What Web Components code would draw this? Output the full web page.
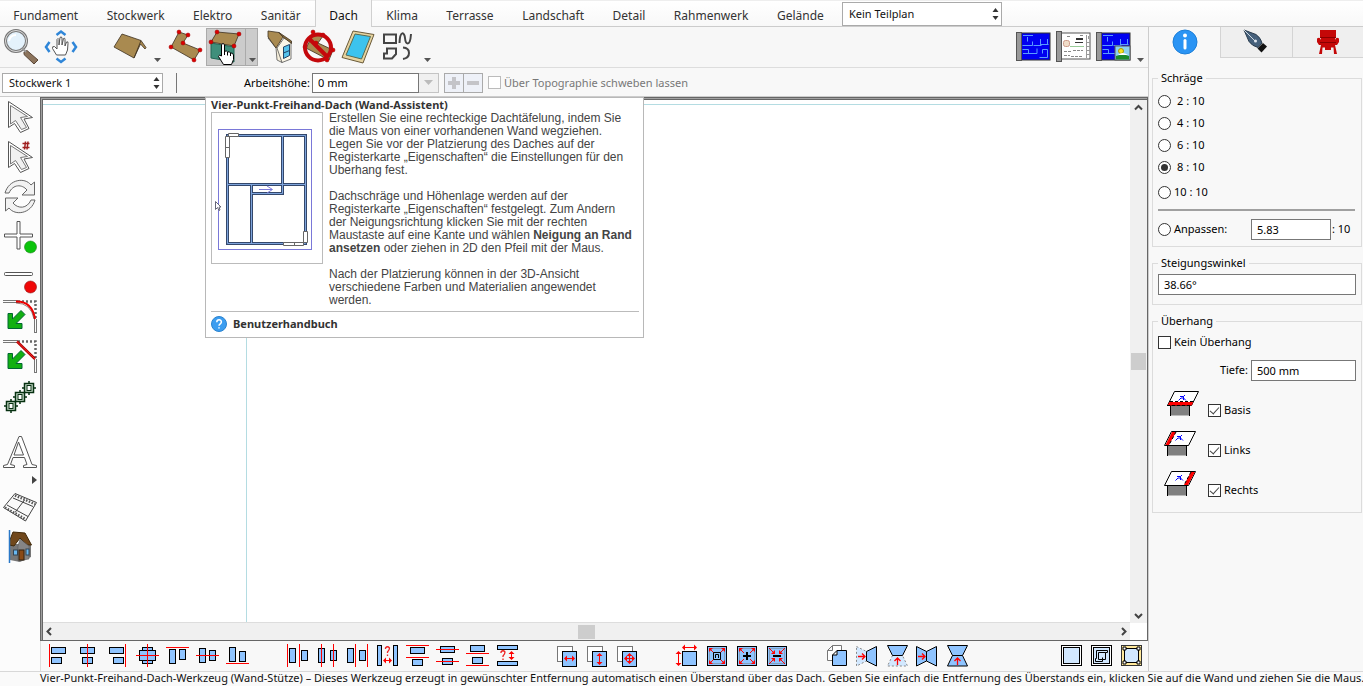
<!DOCTYPE html>
<html lang="de">
<head>
<meta charset="utf-8">
<title>Hausplaner – Dach</title>
<style>
html,body{height:100%}
body{margin:0;overflow:hidden;font:11px/16px "Noto Sans","Open Sans",sans-serif;color:#000;background:#f8f8f8}
</style>
</head>
<body>
<planner-app></planner-app>

<template id="planner-app">
<style>
:host{display:flex;flex-direction:column;height:100vh}
.main{flex:1;display:grid;grid-template-columns:minmax(0,1fr) 215px;min-height:0}
.left{display:flex;flex-direction:column;min-width:0;min-height:0}
.work{flex:1;display:grid;grid-template-columns:40px minmax(0,1fr);min-height:0;position:relative}
.stage{display:flex;flex-direction:column;min-height:0;min-width:0}
drawing-canvas{flex:1}
help-tip{position:absolute;left:205px;top:0}
</style>
<menu-bar></menu-bar>
<div class="main">
  <div class="left">
    <tool-bar></tool-bar>
    <option-bar></option-bar>
    <div class="work">
      <tool-rail></tool-rail>
      <div class="stage">
        <drawing-canvas></drawing-canvas>
        <align-bar></align-bar>
      </div>
      <help-tip>
        <span slot="title">Vier-Punkt-Freihand-Dach (Wand-Assistent)</span>
        <p>Erstellen Sie eine rechteckige Dachtäfelung, indem Sie<br>die Maus von einer vorhandenen Wand wegziehen.<br>Legen Sie vor der Platzierung des Daches auf der<br>Registerkarte „Eigenschaften“ die Einstellungen für den<br>Uberhang fest.</p>
        <p>Dachschräge und Höhenlage werden auf der<br>Registerkarte „Eigenschaften“ festgelegt. Zum Andern<br>der Neigungsrichtung klicken Sie mit der rechten<br>Maustaste auf eine Kante und wählen <b>Neigung an Rand<br>ansetzen</b> oder ziehen in 2D den Pfeil mit der Maus.</p>
        <p>Nach der Platzierung können in der 3D-Ansicht<br>verschiedene Farben und Materialien angewendet<br>werden.</p>
        <span slot="link">Benutzerhandbuch</span>
      </help-tip>
    </div>
  </div>
  <property-panel></property-panel>
</div>
<status-bar>Vier-Punkt-Freihand-Dach-Werkzeug (Wand-Stütze) – Dieses Werkzeug erzeugt in gewünschter Entfernung automatisch einen Überstand über das Dach. Geben Sie einfach die Entfernung des Überstands ein, klicken Sie auf die Wand und ziehen Sie die Maus.</status-bar>
</template>

<template id="menu-bar">
<style>
:host{display:flex;height:26px;border-bottom:1px solid #ccc;background:linear-gradient(#eee 1px,#fff 1px,#f8f8f8);font-size:12px}
nav{display:flex;width:838px}
a{flex:1 0 auto;text-align:center;padding:0 14px;line-height:31px;height:26px;color:#333;text-decoration:none}
a:first-child{padding-left:13px}
a.on{height:27px;background:#f7f7f7;box-shadow:inset 1px 0 #d0d0d0,inset -1px 0 #d0d0d0;color:#111}
select-box{width:160px;height:24px;margin:2px 0 0 4px;font-size:11px}
</style>
<nav aria-label="Register">
<a href="#fundament">Fundament</a><a href="#stockwerk">Stockwerk</a><a href="#elektro">Elektro</a><a href="#sanitaer">Sanitär</a><a href="#dach" class="on" aria-current="page">Dach</a><a href="#klima">Klima</a><a href="#terrasse">Terrasse</a><a href="#landschaft">Landschaft</a><a href="#detail">Detail</a><a href="#rahmenwerk">Rahmenwerk</a><a href="#gelaende">Gelände</a>
</nav>
<select-box label="Teilplan" value="Kein Teilplan"></select-box>
</template>

<template id="select-box">
<style>
:host{display:grid;grid-template-columns:1fr 12px;align-items:center;box-sizing:border-box}
select{grid-area:1/1/2/3;appearance:none;box-sizing:border-box;width:100%;height:100%;border:1px solid #aaa;border-radius:0;background:#fff;font:inherit;color:#111;padding:0 6px;margin:0}
svg{grid-area:1/2;pointer-events:none;z-index:1;margin-left:2px}
</style>
<select></select>
<svg width="7" height="12" viewBox="0 0 7 12"><path d="M3.500 0 6.500 4H.5ZM.5 8H6.500L3.500 12Z" fill="#333"/></svg>
</template>

<template id="tool-bar">
<style>
:host{display:flex;height:40px;border-bottom:1px solid #ddd;background:#f7f7f7}
button{border:0;background:none;padding:0;margin:1px 0 0;width:40px;height:38px;display:block;flex:none}
button.more{width:15px;display:flex;align-items:flex-end;justify-content:center;padding-bottom:4px;box-sizing:border-box}
.on{background:#ccc;box-shadow:inset 0 0 0 1px #aaa;margin-left:1px}
.more.on{width:12px;margin:1px 2px 0 0;box-shadow:inset -1px 0 #aaa,inset 0 1px #aaa,inset 0 -1px #aaa}
.g30{margin-left:30px}
.end{margin-left:auto}
</style>
<button aria-label="Zoom"><app-icon name="zoom"></app-icon></button>
<button aria-label="Verschieben"><app-icon name="pan"></app-icon></button>
<button class="g30" aria-label="Dach"><app-icon name="roof"></app-icon></button>
<button class="more" aria-label="Weitere Dächer"><app-icon name="down"></app-icon></button>
<button aria-label="Freihand-Dach"><app-icon name="lroof"></app-icon></button>
<button class="on" aria-label="Vier-Punkt-Freihand-Dach"><app-icon name="fourroof"></app-icon></button>
<button class="more on" aria-label="Weitere Freihand-Dächer"><app-icon name="down"></app-icon></button>
<button aria-label="Gaube"><app-icon name="dormer"></app-icon></button>
<button aria-label="Dachausschnitt"><app-icon name="noroof"></app-icon></button>
<button aria-label="Dachfenster"><app-icon name="skylight"></app-icon></button>
<button aria-label="Formen"><app-icon name="shapes"></app-icon></button>
<button class="more" aria-label="Weitere Formen"><app-icon name="down"></app-icon></button>
<button class="end" aria-label="2D-Ansicht"><app-icon name="blue"></app-icon></button>
<button aria-label="Planlayout"><app-icon name="sheet"></app-icon></button>
<button aria-label="3D-Ansicht"><app-icon name="blue3d"></app-icon></button>
<button class="more" aria-label="Weitere Ansichten"><app-icon name="down"></app-icon></button>
</template>

<template id="option-bar">
<style>
:host{display:flex;align-items:center;height:27px;border-bottom:1px solid #ccc;background:#f8f8f8;padding:1px 2px 0}
select-box{width:161px;height:20px}
hr{width:1px;height:20px;border:0;margin:0 0 0 13px;background:#777}
label{color:#000}
.h{width:133px;text-align:right;margin:0 2px 0 0}
.field{width:107px;height:20px;box-sizing:border-box;border:1px solid #777;padding:0 5px;font:inherit;background:#fff;border-radius:0;margin:0}
button{box-sizing:border-box;height:20px;width:20px;padding:0;border:1px solid #c4c4c4;background:#f0f0f0;display:grid;place-items:center}
.drop{border-left:0}
.pm{background:#eef1f8;border-color:#aaa;margin-left:-1px}
.first{margin-left:5px}
check-box{margin-left:5px;color:#777;--box:#bbb;--gap:3px}
</style>
<select-box label="Stockwerk" value="Stockwerk 1"></select-box>
<hr>
<label class="h" for="h">Arbeitshöhe:</label>
<input class="field" id="h" value="0 mm">
<button class="drop" aria-label="Höhe wählen"><svg width="9" height="5"><path d="M0 0h9L4.500 5Z" fill="#bbb"/></svg></button>
<button class="pm first" aria-label="Erhöhen"><svg width="14" height="14"><path d="M7 1v12M1 7h12" stroke="#c4c4c8" stroke-width="4"/></svg></button>
<button class="pm" aria-label="Verringern"><svg width="14" height="14"><path d="M1 7h12" stroke="#c4c4c8" stroke-width="4"/></svg></button>
<check-box label="Über Topographie schweben lassen" disabled></check-box>
</template>

<template id="check-box">
<style>
:host{display:inline-block}
label{display:flex;align-items:center;gap:var(--gap,3px);white-space:nowrap}
input{appearance:none;box-sizing:border-box;width:13px;height:13px;border:1px solid var(--box,#333);background:#fff;margin:0;display:grid;place-items:center;flex:none}
input[type=radio]{border-radius:50%}
input[type=radio]:checked::before{content:"";width:7px;height:7px;border-radius:50%;background:#333}
input[type=checkbox]:checked::before{content:"";width:8px;height:4px;border:solid #444;border-width:0 0 1px 1px;transform:translateY(-1px) rotate(-48deg)}
</style>
<label><input><span></span></label>
</template>

<template id="tool-rail">
<style>
:host{display:flex;flex-direction:column;background:#fcfcfc}
button{border:0;background:none;padding:0;width:40px;height:40px;flex:none}
.gap{margin-top:15px}
.sub{height:15px;display:flex;justify-content:flex-end;align-items:center;padding-right:3px}
</style>
<button aria-label="Auswählen"><app-icon name="select"></app-icon></button>
<button aria-label="Raster-Auswahl"><app-icon name="selectgrid"></app-icon></button>
<button aria-label="Drehen"><app-icon name="rotate"></app-icon></button>
<button aria-label="Hinzufügen"><app-icon name="add"></app-icon></button>
<button aria-label="Entfernen"><app-icon name="remove"></app-icon></button>
<button aria-label="Abrunden"><app-icon name="fillet"></app-icon></button>
<button aria-label="Abschrägen"><app-icon name="chamfer"></app-icon></button>
<button aria-label="Vervielfältigen"><app-icon name="chain"></app-icon></button>
<button class="gap" aria-label="Text"><app-icon name="text"></app-icon></button>
<button class="sub" aria-label="Weitere Textwerkzeuge"><svg width="5" height="8"><path d="M0 0 5 4 0 8Z" fill="#444"/></svg></button>
<button aria-label="Film"><app-icon name="film"></app-icon></button>
<button aria-label="Haus"><app-icon name="house"></app-icon></button>
</template>

<template id="drawing-canvas">
<style>
:host{display:block;box-sizing:border-box;min-height:0;padding:1px 0 0 1px;background:#a0a0a0;border:1px solid #666}
.in{height:100%;box-sizing:border-box;border:solid #666;border-width:1px 0 0 1px;display:grid;grid-template-columns:1fr 17px;grid-template-rows:1fr 17px;background:#fff}
.sheet{position:relative;border-bottom:1px solid #ddd}
.v,.hz{position:absolute;background:#b4dce2}
.v{left:203px;top:0;bottom:0;width:1px}
.hz{top:4px;left:0;right:0;height:1px}
.bar{background:#f0f0f0;display:flex;align-items:center;justify-content:space-between}
.vert{flex-direction:column}
i{display:block;background:#cdcdcd}
.vert i{width:15px;height:17px}
.horiz i{width:17px;height:14px}
.bar svg{display:block;flex:none}
</style>
<div class="in">
  <div class="sheet"><div class="hz"></div><div class="v"></div></div>
  <div class="bar vert"><svg width="17" height="15"><path d="M5 9.500 8.500 6 12 9.500" fill="none" stroke="#444" stroke-width="2"/></svg><i></i><svg width="17" height="15"><path d="M5 6 8.500 9.500 12 6" fill="none" stroke="#444" stroke-width="2"/></svg></div>
  <div class="bar horiz"><svg width="15" height="17"><path d="M8 5 4.500 8.500 8 12" fill="none" stroke="#444" stroke-width="2"/></svg><i></i><svg width="15" height="17"><path d="M7 5 10.500 8.500 7 12" fill="none" stroke="#444" stroke-width="2"/></svg></div>
</div>
</template>

<template id="help-tip">
<style>
:host{display:block;box-sizing:border-box;width:439px;border:1px solid #b8b8b8;background:#fff;padding:0 4px 5px 5px;color:#444}
h2{margin:0;font-size:11px;line-height:14px;font-weight:700;color:#333}
.row{display:flex;gap:6px}
figure{margin:0;box-sizing:border-box;width:112px;height:152px;border:1px solid #bbb;flex:none}
figure svg{display:block}
.body{font:12px/13px "Liberation Sans",Arial,sans-serif;padding-bottom:4px;white-space:nowrap}
::slotted(p){margin:0 0 13px}
::slotted(p:last-of-type){margin:0!important}
footer{border-top:1px solid #bbb;padding-top:4px}
a{display:flex;align-items:center;gap:6px;font-weight:700;color:#333;text-decoration:none}
</style>
<h2><slot name="title"></slot></h2>
<div class="row">
<figure><svg width="110" height="150" viewBox="0 0 110 150" fill="none">
<rect x="6.500" y="16.500" width="93" height="120" stroke="#7a78d8"/>
<g stroke="#34486c" stroke-width="3"><path d="M15.500 22.500H93.500V130.500H15.500Z M70.500 22V80.500H39 M16 71.500H93 M39.500 71V130"/></g>
<g stroke="#7ea4dc"><path d="M15.500 22.500H93.500V130.500H15.500Z M70.500 22V80.500H39 M16 71.500H93 M39.500 71V130"/></g>
<g fill="#fff" stroke="#666"><path d="M13.500 23.500h4v21h-4ZM13.500 34.500h4M16.500 20.500h10v3h-10ZM91.500 118.500h4v11h-4ZM71.500 129.500h20v3h-20ZM82.500 129.500v3"/></g>
<path d="M47 76.500H60M55 73 60.500 76.500 55 80" stroke="#7a78d8"/>
<path d="M3.500 88.500V96.500L5.500 94.500 7 97.500 8 97 7 94H9Z" fill="#fff" stroke="#667"/>
</svg></figure>
<div class="body"><slot></slot></div>
</div>
<footer><a href="#handbuch"><svg width="16" height="16" viewBox="0 0 16 16"><circle cx="8" cy="8" r="7.500" fill="#3c9df0" stroke="#2b83cf"/><path d="M5.800 6.200C5.800 3 10.400 3 10.400 6 10.400 7.800 8 7.800 8 9.800M8 11.200V12.600" fill="none" stroke="#fff" stroke-width="1.500"/></svg><slot name="link"></slot></a></footer>
</template>

<template id="align-bar">
<style>
:host{display:flex;height:30px;background:#f8f8f8;border-left:1px solid #ddd;padding:0 2px;overflow:hidden}
button{border:0;background:none;padding:0;width:30px;height:30px;flex:none}
.g{margin-left:30px}
.end{margin-left:auto}
</style>
</template>

<template id="property-panel">
<style>
:host{display:flex;flex-direction:column;background:#f8f8f8;border-left:1px solid #ccc}
.tabs{display:grid;grid-template-columns:71px 1fr 1fr;height:31px}
.tabs button{border:solid #d4d4d4;border-width:0 0 1px 1px;background:#efefef;padding:0;display:grid;place-items:center}
.tabs button.on{background:none;border-color:transparent}
fieldset{margin:0 1px 0 3px;border:1px solid #dcdcdc;padding:0 5px;min-width:0}
legend{padding:0 3px;line-height:16px}
.r{display:flex;height:22px;align-items:center}
.first{margin-top:4px}
.gap{margin-top:3px}
check-box.w{--gap:6px}
hr{height:2px;border:0;background:#a0a0a0;margin:6px 1px 7px 0}
.field{box-sizing:border-box;height:21px;border:1px solid #777;background:#fff;font:inherit;padding:0 5px;margin:0;min-width:0;border-radius:0}
.ratio{width:80px;margin-left:auto}
.suf{width:24px;padding-left:1px}
.slope{display:block;width:198px;margin:3px 0 9px}
.depth{width:105px;margin:0 0 0 3px}
.end{justify-content:flex-end;margin-top:6px}
.s{display:grid;grid-template-columns:50px 1fr;height:40px}
.s.first{margin-top:9px}
.s check-box{margin-top:12px}
.f1{margin-top:12px;padding-bottom:6px}
.f2{margin-top:8px}
.f3{margin-top:8px;padding-bottom:2px}
.f3 .top{margin-top:2px}
</style>
<div class="tabs"><button class="on" aria-label="Eigenschaften"><app-icon name="info"></app-icon></button><button aria-label="Darstellung"><app-icon name="pen"></app-icon></button><button aria-label="Objekte"><app-icon name="chair"></app-icon></button></div>
<fieldset class="f1"><legend>Schräge</legend>
<div class="r first"><check-box class="w" type="radio" label="2 : 10"></check-box></div>
<div class="r"><check-box class="w" type="radio" label="4 : 10"></check-box></div>
<div class="r"><check-box class="w" type="radio" label="6 : 10"></check-box></div>
<div class="r"><check-box class="w" type="radio" label="8 : 10" checked></check-box></div>
<div class="r gap"><check-box type="radio" label="10 : 10"></check-box></div>
<hr>
<div class="r"><check-box type="radio" label="Anpassen:"></check-box><input class="field ratio" id="ratio" aria-label="Anpassen" value="5.83"><label class="suf" for="ratio">: 10</label></div>
</fieldset>
<fieldset class="f2"><legend>Steigungswinkel</legend><input class="field slope" aria-label="Steigungswinkel" value="38.66°"></fieldset>
<fieldset class="f3"><legend>Überhang</legend>
<div class="r top"><check-box label="Kein Überhang"></check-box></div>
<div class="r end"><label for="depth">Tiefe:</label><input class="field depth" id="depth" value="500 mm"></div>
<div class="s first"><app-icon name="basis"></app-icon><check-box label="Basis" checked></check-box></div>
<div class="s"><app-icon name="links"></app-icon><check-box label="Links" checked></check-box></div>
<div class="s"><app-icon name="rechts"></app-icon><check-box label="Rechts" checked></check-box></div>
</fieldset>
</template>

<template id="status-bar">
<style>
:host{display:block;height:14px;border-top:1px solid #d8d8d8;background:#fafafa;padding-left:40px;line-height:12px;white-space:nowrap;overflow:hidden;color:#111}
</style>
<slot></slot>
</template>

<script>
const B = 'fill="#8fc4ff" stroke="#000"';
const rect = (x, y, w, h, a = B) => `<rect x="${x}" y="${y}" width="${w}" height="${h}" ${a}/>`;
const vline = (...xs) => xs.map(x => `<path d="M${x} 3V26" stroke="#f00"/>`).join('');
const hline = (...ys) => ys.map(y => `<path d="M3 ${y}H26" stroke="#f00"/>`).join('');
const harrow = (x1, x2, y) => `<path d="M${x1} ${y}H${x2}" stroke="#f00"/><path d="M${x1 - 1} ${y}l3 -3v6ZM${x2 + 1} ${y}l-3 -3v6Z" fill="#f00"/>`;
const varrow = (x, y1, y2) => `<path d="M${x} ${y1}V${y2}" stroke="#f00"/><path d="M${x} ${y1 - 1}l-3 3h6ZM${x} ${y2 + 1}l-3 -3h6Z" fill="#f00"/>`;
const question = (x, y) => `<path d="M${x - 2} ${y + 2}V${y + 1}Q${x} ${y - 1.5} ${x + 2} ${y + 1}Q${x + 2} ${y + 3} ${x} ${y + 5}V${y + 6}M${x} ${y + 7.5}v1.500" fill="none" stroke="#e22" stroke-width="1.300"/>`;
const frame = inner => rect(4.5, 5.5, 19, 19) + '<rect x="6.500" y="7.500" width="15" height="15" fill="none" stroke="#777" stroke-dasharray="1 1"/>' + inner;
const corners = '<path d="M6 7h4l-4 4ZM22 7h-4l4 4ZM6 23v-4l4 4ZM22 23h-4l4 -4Z" fill="#f00"/><path d="M7 8l4 4M21 8l-4 4M7 22l4 -4M21 22l-4 -4" stroke="#f00"/>';
const inward = '<path d="M12 13H8l4 -4ZM16 13h4l-4 -4ZM12 17v4l-4 -4ZM16 17h4l-4 4Z" fill="#f00"/><path d="M6 7l5 5M22 7l-5 5M6 23l5 -5M22 23l-5 -5" stroke="#f00"/>';
const pair = rect(4.5, 5.5, 15, 15, 'fill="#fff" stroke="#777"') + rect(9.5, 10.5, 14, 15);
const dots = pts => pts.map(([x, y]) => `<circle cx="${x}" cy="${y}" r="2" fill="#d00" stroke="#900" stroke-width=".5"/>`).join('');
const wood = 'fill="#a98a50" stroke="#3c3020" stroke-width=".8" stroke-linejoin="round"';
const plan = '<rect x="8" y="5" width="29" height="27" fill="#0000f0" stroke="#333"/><path d="M10 7.500h10M9.500 17.500h10v-4M14.500 9v4.500M10 25.500h14v-5M20.500 17.500h8M27.500 11v6.500M27.500 16.500h8M34.500 11v5M26.500 29.500h8v-8h-5v4M9.500 21.500h6v4" fill="none" stroke="#5a9cff"/><rect x="3.500" y="4.500" width="5" height="28" fill="#999" stroke="#555"/>';
const arrowShape = '<path d="M8.500 4.500V30.500L14.500 26.500 20.500 35.500 29 31.500 24 22 32.500 20.500Z" fill="#fff" stroke="#555" stroke-linejoin="round"/><path d="M10.500 8.500V27L15.500 23.500 21.500 32.500 26.500 30.500 20.500 20.500 27.500 19.500Z" fill="#f1f1f1" stroke="#777"/>';
const turn = 'M5 16C9 2 25 0 31 8L34.500 5V18H22L27 13C22 7 13 7 9 16Z';
const greenArrow = '<path d="M8 16.500h4.500v5.500L21 13.500 25 17.500 16 26.500H22V31.500H8Z" fill="#12b012" stroke="#063"/>';
const link = (x, y) => `<path d="M${x - 7} ${y}H${x + 7}M${x} ${y - 7}V${y + 7}" stroke="#063010" stroke-width="1.500"/><rect x="${x - 4.5}" y="${y - 4.5}" width="9" height="9" fill="#c8dccb" stroke="#063010" stroke-width="1.500"/><rect x="${x - 2}" y="${y - 2.5}" width="4" height="5" fill="#fff" stroke="#063010"/>`;
const overhang = (dx, red) => `<g transform="translate(${dx} 0)"><rect x="12.500" y="15.500" width="19" height="10" fill="#808080"/><path d="M12.500 26V15M31.500 26V15" stroke="#000"/><path d="M9.500 15.500 16.500 1.500H40.500L33.500 15.500Z" fill="#fff" stroke="#000"/>${red}<path d="M20.500 10.500 23 8H25.500L28 10.500M22 6.500H25.500V10M25.500 6.500 27 5" fill="none" stroke="#00f"/></g>`;

const icons = {
  down: [7, 4, '<path d="M0 0H7L3.500 4Z" fill="#555"/>'],
  zoom: [40, 38, '<path d="M24 24 27 22.500 38 32 34 36 24 26.500Z" fill="#8c745c" stroke="#5a4636"/><circle cx="16" cy="13" r="10.500" fill="#e4f2fc" stroke="#777" stroke-width="3"/><circle cx="16" cy="13" r="10.500" fill="none" stroke="#ddd"/><path d="M22 20 26 24" stroke="#999" stroke-width="2"/><path d="M9 13Q10 7 16 7" fill="none" stroke="#fff" stroke-width="2"/>'],
  pan: [40, 38, '<path d="M16.500 27 12.500 20.500Q12 18 14.500 18.500L17 21V11.500Q18 9.500 19 11.500V17L20 9.500Q21.500 8 22 10V17L23.500 10.500Q25 9.500 25 11.500V18L26.500 14Q28.500 13 28 15.500L27.500 22 25.500 27Z" fill="#fff" stroke="#555"/><path d="M16.500 7 21 3.500 25.500 7M16.500 30.500 21 34 25.500 30.500M9.500 14 6 19 9.500 24M32.500 14 36 19 32.500 24" fill="none" stroke="#2f86d8" stroke-width="2.500"/>'],
  roof: [40, 38, `<path d="M12 6 31 12.500 36 19.500 35 21 30.500 16 24 30 4 19Z" ${wood}/><path d="M31 12.500 24 30" stroke="#3c3020" stroke-width=".8"/>`],
  lroof: [40, 38, `<path d="M14 4 23 7 18 15 35 22 29 32 6 19Z" ${wood}/>` + dots([[14, 4], [23, 7], [18, 15], [35, 22], [29, 32], [6, 19]])],
  fourroof: [40, 38, `<path d="M5 15 28 19V34L5 30Z" fill="#3f8f7b" stroke="#265"/><path d="M11 4 33 6 28 18 5 14Z" ${wood}/>` + dots([[11, 4], [33, 6], [28, 18], [5, 14]]) + '<path d="M15.500 16.500Q17 14.500 18.500 16.500V23.500Q20.500 22 21.500 24 23.500 23 24.500 25 27 24.500 27.500 27V31.500L25.500 36.500H17.500L12.500 28.500Q13 26 15.500 28Z" fill="#fff" stroke="#000"/><path d="M18.500 23v4M21.500 24v3.500M24.500 25v3" stroke="#000"/>'],
  dormer: [40, 38, `<path d="M8 10 16 20 17 32 22 34.500V14L15 9Z" fill="#f6eeda" stroke="#555" stroke-width=".8"/><path d="M17 20 24 10 31 14V31L22 34.500Z" fill="#fbf6e6" stroke="#555" stroke-width=".8"/><path d="M23.500 19 29.500 16.500V27.500L23.500 30.500Z" fill="#55c2ea" stroke="#246"/><path d="M23.500 25 29.500 22.500" stroke="#246"/><path d="M8 3 19 4.500 23 9 16 20 8 9Z" ${wood}/><path d="M19 4.500 31.500 13V15.500L23 9Z" fill="#8a6d3a" stroke="#3c3020" stroke-width=".8"/>`],
  noroof: [40, 38, `<path d="M14 5 23 8 18 15 33 22 29 32 6 20Z" ${wood}/>` + dots([[13, 4], [23, 7], [16, 15], [33, 22], [27, 32], [5, 19]]) + '<circle cx="18" cy="19.500" r="13" fill="none" stroke="#c4080c" stroke-width="4"/><path d="M9 10.500 27 28.500" stroke="#c4080c" stroke-width="4"/>'],
  skylight: [40, 38, '<path d="M13 3 34 6.500 23 35 2 29.500Z" fill="#e6d3a0" stroke="#6a5a38"/><path d="M15 6 30.500 8.500 21.500 31 6 27Z" fill="#3cc3ee" stroke="#5a6a50"/>'],
  shapes: [40, 38, '<g fill="none" stroke="#444" stroke-width="2"><path d="M4 6.500H16V15H4ZM19.500 15C20 2 24.500 4 25 10S30 20 31 6M7 20.500H16V26L12 30.500H4V25.500H7ZM23 19.500Q29 20 29 25 29 30 23 31"/></g>'],
  blue: [40, 38, plan],
  sheet: [40, 38, '<rect x="8" y="5" width="29" height="26" fill="#fff" stroke="#555"/><rect x="3.500" y="3.500" width="5" height="30" fill="#999" stroke="#555"/><path d="M33.500 7v23M35.500 8v3M34 14.500h3M34 18.500h3M34 22.500h3M34 26.500h3" stroke="#999"/><path d="M11 23.500h8M20 22.500h10M11 27.500h6M18 28.500h12M14 8.500h4M27 7.500h4" stroke="#888" stroke-dasharray="3 1"/><path d="M23 10h7v2h-7ZM22 14h8v1h-8Z" fill="#333"/><rect x="10.500" y="12.500" width="6" height="6" rx="2" fill="#f0dcc8" stroke="#c98"/><path d="M17 18.500h14" stroke="#9c9"/>'],
  blue3d: [40, 38, plan + '<rect x="22" y="18" width="15" height="14" fill="#8cd0f0" stroke="#555"/><path d="M23 28q7 -3 13 0v3.500H23Z" fill="#1a8a2a"/><circle cx="28" cy="23" r="2.500" fill="#f8e020" stroke="#a90"/><path d="M25 27q4 -4 10 0Z" fill="#fff"/>'],
  info: [26, 26, '<circle cx="13" cy="13" r="12" fill="#2a94f4" stroke="#1d7fd8"/><path d="M13 11.500V19" stroke="#fff" stroke-width="3" stroke-linecap="round"/><circle cx="13" cy="6.500" r="2" fill="#fff"/>'],
  pen: [26, 26, '<path d="M1 1 13 5.500Q18 9 19 14L15 18.500Q9 17 6 12.500Z" fill="#46617c" stroke="#2a3b4c"/><path d="M1 1 12 12" stroke="#cfd8e0"/><circle cx="12.500" cy="12" r="1.500" fill="#dfe6ee"/><path d="M20 14 24 17.500 18.500 23.500 14.500 19.500Z" fill="#111"/>'],
  chair: [26, 26, '<path d="M5 1H21V8H20V13H6V8H5ZM2 9.500Q5 7.500 6 11V13H20V11Q21 7.500 24 9.500V13L22 16H4L2 13ZM6 16H20L22 25H19L18.500 18.500H16V21H10V18.500H7.500L7 25H4Z" fill="#c40808"/><path d="M5 8.500H21M5 13.500H21" stroke="#8a0000"/>'],
  select: [40, 40, arrowShape],
  selectgrid: [40, 40, arrowShape + '<path d="M25.500 4.500 24.500 12.500M28 4.500 27 12.500M22.500 6.500h7M22.500 10.500h7" stroke="#a02020" stroke-width="1.500"/>'],
  rotate: [40, 40, `<path d="${turn}" fill="#f2f2f2" stroke="#666"/><path d="${turn}" transform="rotate(180 20 19.500)" fill="#f2f2f2" stroke="#666"/>`],
  add: [40, 40, '<path d="M17 4.500h3V17h12.500v3H20v12h-3V20H4.500v-3H17Z" fill="#fff" stroke="#555"/><circle cx="30.500" cy="30" r="6" fill="#0bc40b" stroke="#188018" stroke-width=".6"/>'],
  remove: [40, 40, '<rect x="4.500" y="15.500" width="28" height="3" rx="1" fill="#fff" stroke="#555"/><circle cx="30.500" cy="30" r="6" fill="#f00808" stroke="#8c1010" stroke-width=".6"/>'],
  fillet: [40, 40, '<path d="M3 3.500H18M3 5.500H18M34.500 22V35M36.500 22V35M34 35.500h3" stroke="#777"/><path d="M18 4.500H35.500V22" fill="none" stroke="#666" stroke-width="2.500" stroke-dasharray="2 2"/><path d="M16 4.500Q32 4 35 22" fill="none" stroke="#e00" stroke-width="2"/><path d="M16 6Q31 6 34 22" fill="none" stroke="#400" stroke-width=".5"/>' + greenArrow],
  chamfer: [40, 40, '<path d="M3 3.500H18M3 5.500H18M34.500 22V35M36.500 22V35M34 35.500h3" stroke="#777"/><path d="M18 4.500H35.500V22" fill="none" stroke="#666" stroke-width="2.500" stroke-dasharray="2 2"/><path d="M17 4.500 35 22" stroke="#a00" stroke-width="2.500"/><path d="M17 4.500 35 22" stroke="#f22"/>' + greenArrow],
  chain: [40, 40, link(11, 29) + link(20, 20) + link(29, 11)],
  text: [40, 40, '<path d="M3.500 35.500V33.500L7.500 32.500 19 4.500H21.500L32 32.500 36.500 33.500V35.500H23.500V33.500L27 32.500 24.500 25.500H13L10.500 32.500 14.500 33.500V35.500ZM14 23H23.500L18.500 10Z" fill="#fff" stroke="#555"/>'],
  film: [40, 40, '<path d="M15 6.500 36.500 15.500 25.500 34 3.500 20.500Z" fill="#fafafa" stroke="#444"/><path d="M15 8.500 35 17M5 20.500 26 32.500" stroke="#555" stroke-width="2.500" stroke-dasharray="1.500 1.500"/><path d="M13 11 33 19.500M7 18 28 29.500M24.500 13 15 25.500" fill="none" stroke="#444"/>'],
  house: [40, 40, '<path d="M10 17H31V30L20 35 10 33Z" fill="#777"/><path d="M13 5 25 6 31.500 18H27L20 11 14 19 9.500 18V14Z" fill="#70481c" stroke="#402808"/><path d="M20 12 29 19V32L18 34V19Z" fill="#858585" stroke="#555" stroke-width=".5"/><rect x="19" y="23" width="5" height="10" fill="#8a4a16" stroke="#321"/><rect x="13.500" y="23" width="4" height="5" fill="#69b8f0" stroke="#345"/><rect x="26" y="22" width="3" height="6" fill="#69b8f0" stroke="#345"/><path d="M9.500 3V36" stroke="#2a78c8" stroke-width="1.500"/>'],
  basis: [46, 30, overhang(0, '<path d="M11.500 12.500H34.500L33.500 15H10.500Z" fill="#f00" stroke="#f00"/><path d="M12 11.500H36M9 15.500H34" stroke="#000" stroke-dasharray="3 2"/>')],
  links: [46, 30, overhang(-3, '<path d="M10.500 15 17 2H21L14 15Z" fill="#f00"/><path d="M21 2 14 15" stroke="#000" stroke-dasharray="3 2"/>')],
  rechts: [46, 30, overhang(-3, '<path d="M29 15 36 2H40L33 15Z" fill="#f00"/><path d="M36 2 29 15" stroke="#000" stroke-dasharray="3 2"/>')],
  a0: [30, 30, rect(8.5, 6.5, 14, 6) + rect(8.5, 16.5, 10, 6) + vline(6.5)],
  a1: [30, 30, rect(7.5, 6.5, 14, 6) + rect(9.5, 16.5, 10, 6) + vline(14.5)],
  a2: [30, 30, rect(6.5, 6.5, 14, 6) + rect(10.5, 16.5, 10, 6) + vline(22.5)],
  a3: [30, 30, rect(9.5, 6.5, 10, 16) + rect(6.5, 9.5, 16, 10) + vline(14.5) + hline(14.5)],
  a4: [30, 30, rect(6.5, 8.5, 6, 14) + rect(16.5, 8.5, 6, 10) + hline(6.5)],
  a5: [30, 30, rect(6.5, 7.5, 6, 14) + rect(16.5, 9.5, 6, 10) + hline(14.5)],
  a6: [30, 30, rect(6.5, 6.5, 6, 14) + rect(16.5, 10.5, 6, 10) + hline(22.5)],
  b0: [30, 30, rect(6.5, 7.5, 6, 14) + rect(18.5, 9.5, 6, 10) + vline(4.5, 16.5)],
  b1: [30, 30, rect(5.5, 7.5, 6, 14) + rect(17.5, 9.5, 6, 10) + vline(8.5, 20.5)],
  b2: [30, 30, rect(4.5, 7.5, 6, 14) + rect(16.5, 9.5, 6, 10) + vline(12.5, 24.5)],
  b3: [30, 30, rect(4.5, 4.5, 4, 20) + rect(20.5, 4.5, 4, 20) + question(14.5, 6) + harrow(11, 18, 19.5)],
  b4: [30, 30, rect(7.5, 6.5, 14, 6) + rect(9.5, 18.5, 10, 6) + hline(4.5, 16.5)],
  b5: [30, 30, rect(7.5, 5.5, 14, 6) + rect(9.5, 17.5, 10, 6) + hline(8.5, 20.5)],
  b6: [30, 30, rect(7.5, 4.5, 14, 6) + rect(9.5, 16.5, 10, 6) + hline(12.5, 24.5)],
  b7: [30, 30, rect(4.5, 4.5, 20, 4) + rect(4.5, 20.5, 20, 4) + question(10, 10) + varrow(18.5, 11, 18)],
  c0: [30, 30, pair + harrow(12, 21, 17.5)],
  c1: [30, 30, pair + varrow(16.5, 13, 23)],
  c2: [30, 30, pair + harrow(12, 21, 17.5) + varrow(16.5, 13, 22)],
  d0: [30, 30, rect(9.5, 10.5, 14, 14) + harrow(10, 23, 6.5) + varrow(5.5, 11, 24)],
  d1: [30, 30, frame(corners + '<path d="M10.500 11.500h7v7h-7ZM12.500 17v-3.500h3V17" fill="none" stroke="#000"/>')],
  d2: [30, 30, frame(corners + '<path d="M14 11v8M10 15h8" stroke="#000" stroke-width="2"/>')],
  d3: [30, 30, frame(inward + '<path d="M10 15h8" stroke="#000" stroke-width="2"/>')],
  e0: [30, 30, `<path d="M4.500 9.500 9.500 4.500H18.500V19.500H4.500ZM4.500 9.500H9.500V4.500" fill="#fff" stroke="#777"/><path d="M9.500 14 14 9.500H23.500V24.500H9.500ZM9.500 14H14V9.500" ${B}/>`],
  e1: [30, 30, `<path d="M3.500 5.500 13.500 10.500V20L3.500 25Z" fill="#d2e8ff" stroke="#888" stroke-dasharray="2 2"/><path d="M13.500 10.500 23.500 5.500V25L13.500 20Z" ${B}/><path d="M5 15.500H12M9 12.500 12 15.500 9 18.500" fill="none" stroke="#f00" stroke-width="1.300"/>`],
  e2: [30, 30, `<path d="M9.500 14.500 4.500 25H24.500L19.500 14.500Z" fill="#d2e8ff" stroke="#888" stroke-dasharray="2 2"/><path d="M4.500 4.500H24.500L19.500 14.500H9.500Z" ${B}/><path d="M14.500 24V17M11.500 20 14.500 17 17.500 20" fill="none" stroke="#f00" stroke-width="1.300"/>`],
  e3: [30, 30, `<path d="M3.500 5.500 13.500 10.500 23.500 5.500V25L13.500 20 3.500 25ZM13.500 10.500V20" ${B}/><path d="M5 15.500H12M9 12.500 12 15.500 9 18.500" fill="none" stroke="#f00" stroke-width="1.300"/>`],
  e4: [30, 30, `<path d="M4.500 4.500H24.500L19.500 14.500 24.500 25H4.500L9.500 14.500ZM9.500 14.500H19.500" ${B}/><path d="M14.500 24V17M11.500 20 14.500 17 17.500 20" fill="none" stroke="#f00" stroke-width="1.300"/>`],
  f0: [30, 30, rect(5.5, 4.5, 20, 20, 'fill="#fff" stroke="#000"') + rect(7.5, 6.5, 16, 16, 'fill="#d2e8ff" stroke="#000"')],
  f1: [30, 30, rect(5.5, 4.5, 20, 20, 'fill="#fff" stroke="#000"') + rect(7.5, 6.5, 16, 16, 'fill="#d2e8ff" stroke="#000"') + '<path d="M10.500 9.500H21.500V11.500H19.500V18.500H16.500V20.500H9.500V17.500H10.500ZM12.500 11.500H19.500M12.500 11.500V18.500H16.500V16.500" fill="none" stroke="#000"/>'],
  f2: [30, 30, rect(5.5, 4.5, 20, 20, 'fill="#ffe89a" stroke="#333"') + rect(8.5, 7.5, 14, 14, 'fill="#d2e8ff" stroke="#000"') + '<path d="M7 6h3v3H7ZM21 6h3v3h-3ZM7 20h3v3H7ZM21 20h3v3h-3Z" fill="#fff" stroke="#000"/>']
};

class Base extends HTMLElement {
  connectedCallback() {
    if (this.shadowRoot) return;
    this.attachShadow({ mode: 'open' });
    const t = document.getElementById(this.localName);
    if (t) this.shadowRoot.append(t.content.cloneNode(true));
    this.setup();
  }
  setup() {}
}

customElements.define('app-icon', class extends Base {
  setup() {
    const [w, h, body] = icons[this.getAttribute('name')];
    this.shadowRoot.innerHTML = `<style>:host{display:block}svg{display:block}</style><svg width="${w}" height="${h}" viewBox="0 0 ${w} ${h}" aria-hidden="true">${body}</svg>`;
  }
});

customElements.define('select-box', class extends Base {
  setup() {
    const s = this.shadowRoot.querySelector('select');
    s.setAttribute('aria-label', this.getAttribute('label'));
    s.add(new Option(this.getAttribute('value')));
  }
});

customElements.define('check-box', class extends Base {
  setup() {
    const i = this.shadowRoot.querySelector('input');
    i.type = this.getAttribute('type') || 'checkbox';
    i.checked = this.hasAttribute('checked');
    i.disabled = this.hasAttribute('disabled');
    this.shadowRoot.querySelector('span').textContent = this.getAttribute('label');
  }
});

customElements.define('align-bar', class extends Base {
  setup() {
    const groups = { a: 7, b: 8, c: 3, d: 4, e: 5, f: 3 };
    const titles = { a: 'Ausrichten', b: 'Verteilen', c: 'Größe angleichen', d: 'Skalieren', e: 'Spiegeln', f: 'Fang' };
    for (const [g, n] of Object.entries(groups)) {
      for (let k = 0; k < n; k++) {
        const b = document.createElement('button');
        if (k === 0 && g !== 'a') b.className = g === 'f' ? 'end' : 'g';
        b.setAttribute('aria-label', `${titles[g]} ${k + 1}`);
        b.innerHTML = `<app-icon name="${g}${k}"></app-icon>`;
        this.shadowRoot.append(b);
      }
    }
  }
});

for (const n of ['menu-bar', 'tool-bar', 'option-bar', 'tool-rail', 'drawing-canvas', 'help-tip', 'property-panel', 'status-bar', 'planner-app'])
  customElements.define(n, class extends Base {});
</script>
</body>
</html>
